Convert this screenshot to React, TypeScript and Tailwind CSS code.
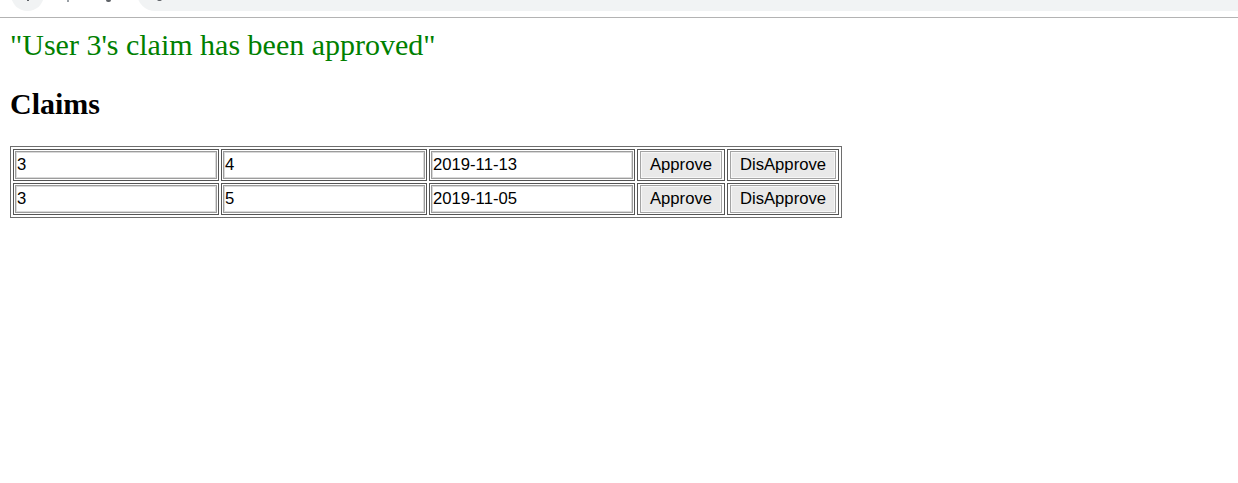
const claims = [
  { user: "3", claimId: "4", date: "2019-11-13" },
  { user: "3", claimId: "5", date: "2019-11-05" },
];

function Field({ value }: { value: string }) {
  return (
    <input
      readOnly
      value={value}
      className="block w-[202px] h-[28px] px-[1px] border border-[#9c9c9c] shadow-[inset_0_0_0_1px_#d9d9d9] bg-white text-black font-['Liberation_Sans',Arial,sans-serif] text-[16.67px] outline-none"
    />
  );
}

function Btn({ label, width }: { label: string; width: string }) {
  return (
    <button
      className={`block ${width} h-[28px] border border-[#a3a3a3] shadow-[inset_0_0_0_1px_#f7f7f7] bg-[#e9e9e9] text-black font-['Liberation_Sans',Arial,sans-serif] text-[16.67px] leading-none`}
    >
      {label}
    </button>
  );
}

export default function App() {
  return (
    <div className="min-h-screen bg-white">
      {/* browser chrome, cut off at the top */}
      <div className="h-[18px] border-b border-[#b3b3b3] overflow-hidden flex items-start">
        <div className="ml-[11px] -mt-[22px] w-[33px] h-[33px] rounded-full bg-[#f1f3f4] flex items-end justify-center shrink-0">
          <span className="block w-[2px] h-[2px] bg-[#5f6368] mb-[10px]" />
        </div>
        <span className="block ml-[23px] w-[2px] h-[2px] bg-[#9aa0a6] shrink-0" />
        <span className="block ml-[37px] w-[5px] h-[2px] bg-[#5f6368] rounded-b-full shrink-0" />
        <div className="ml-[26px] -mt-[25px] h-[36px] flex-1 rounded-l-full bg-[#f1f3f4] flex items-end">
          <span className="block ml-[20px] w-[5px] h-[2px] bg-[#5f6368] rounded-b-full mb-[10px] shrink-0" />
        </div>
      </div>

      <div className="p-[10px]">
        <div className="font-['Liberation_Serif','Times_New_Roman',serif] text-[30px] leading-[34px] text-[#008000]">
          "User 3's claim has been approved"
        </div>
        <h2 className="mt-[25px] mb-[25px] font-['Liberation_Serif','Times_New_Roman',serif] text-[30px] leading-[34px] font-bold text-black">
          Claims
        </h2>
        <table className="border-separate border-spacing-[2.5px] border border-[#6e6e6e]">
          <tbody>
            {claims.map((c) => (
              <tr key={c.claimId}>
                <td className="border border-[#555] p-[1px]">
                  <Field value={c.user} />
                </td>
                <td className="border border-[#555] p-[1px]">
                  <Field value={c.claimId} />
                </td>
                <td className="border border-[#555] p-[1px]">
                  <Field value={c.date} />
                </td>
                <td className="border border-[#555] p-[1px] px-[2px]">
                  <Btn label="Approve" width="w-[82px]" />
                </td>
                <td className="border border-[#555] p-[1px] px-[2px]">
                  <Btn label="DisApprove" width="w-[106px]" />
                </td>
              </tr>
            ))}
          </tbody>
        </table>
      </div>
    </div>
  );
}
